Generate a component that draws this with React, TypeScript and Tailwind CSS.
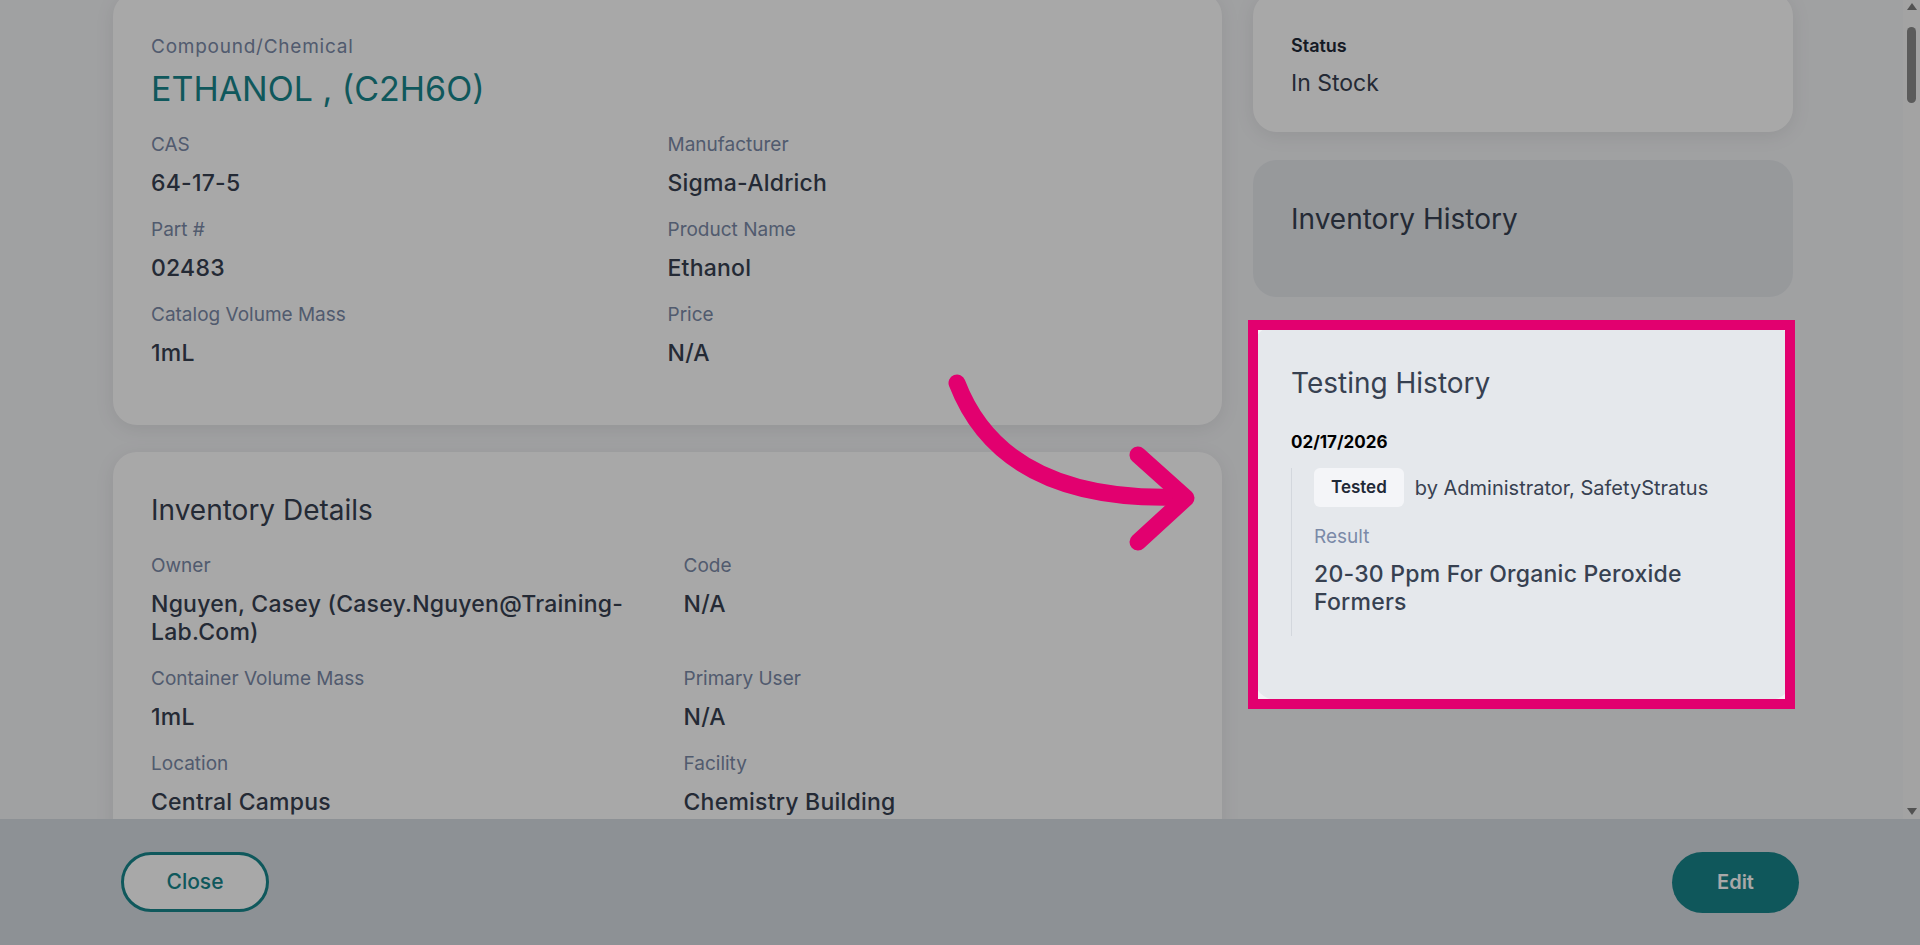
import React, { useLayoutEffect, useRef } from "react";

function Field({ label, value }: { label: string; value: string }) {
  return (
    <div className="flex flex-col mb-[21px]">
      <div className="text-[19px] leading-6 text-[#7b8aa8]">{label}</div>
      <div className="mt-3 text-[23px] leading-7 font-medium tracking-[0.01em] text-[#374151]">{value}</div>
    </div>
  );
}

export default function App() {
  const scroller = useRef<HTMLDivElement>(null);
  useLayoutEffect(() => {
    if (scroller.current) scroller.current.scrollTop = 124;
  }, []);

  return (
    <div className="relative h-[945px] w-full overflow-hidden flex flex-col bg-[#f3f4f6] font-['Inter',sans-serif]">
      <div className="flex h-[819px] shrink-0">
        <div ref={scroller} className="flex-1 h-full overflow-hidden">
          <div className="min-h-[2000px] pl-[113px] pt-[116px]">
            <div className="flex items-start gap-[31px]">
              {/* Left column */}
              <div className="w-[1109px] flex flex-col gap-[27px]">
                <div className="bg-white rounded-3xl px-[38px] pt-[43px] pb-[37px] shadow-[0_4px_20px_rgba(0,0,0,0.08)]">
                  <div className="text-[19px] leading-6 tracking-[0.04em] text-[#7b8aa8]">Compound/Chemical</div>
                  <div className="mt-[10px] text-[34px] leading-10 text-[#17868c]">ETHANOL , (C2H6O)</div>
                  <div className="mt-6 grid grid-cols-2">
                    <Field label="CAS" value="64-17-5" />
                    <Field label="Manufacturer" value="Sigma-Aldrich" />
                    <Field label="Part #" value="02483" />
                    <Field label="Product Name" value="Ethanol" />
                    <Field label="Catalog Volume Mass" value="1mL" />
                    <Field label="Price" value="N/A" />
                  </div>
                </div>

                <div className="bg-white rounded-3xl px-[38px] pt-[42px] pb-10 shadow-[0_4px_20px_rgba(0,0,0,0.08)]">
                  <div className="text-[28px] leading-8 text-[#374151] mb-7">Inventory Details</div>
                  <div className="grid grid-cols-2 gap-x-8">
                    <Field label="Owner" value="Nguyen, Casey (Casey.Nguyen@Training-Lab.Com)" />
                    <Field label="Code" value="N/A" />
                    <Field label="Container Volume Mass" value="1mL" />
                    <Field label="Primary User" value="N/A" />
                    <Field label="Location" value="Central Campus" />
                    <Field label="Facility" value="Chemistry Building" />
                  </div>
                </div>
              </div>

              {/* Right column */}
              <div className="w-[540px] flex flex-col gap-[28px]">
                <div className="bg-white rounded-3xl px-[38px] pt-[42px] pb-[35px] shadow-[0_4px_20px_rgba(0,0,0,0.08)]">
                  <div className="text-[18px] leading-6 font-semibold text-[#1f2937]">Status</div>
                  <div className="mt-[11px] text-[23px] leading-7 text-[#374151]">In Stock</div>
                </div>

                <div className="bg-[#e5e8ec] rounded-3xl px-[38px] pt-[43px] pb-[62px]">
                  <div className="text-[28px] leading-8 text-[#374151]">Inventory History</div>
                </div>

                <div className="bg-[#e5e8ec] rounded-3xl px-[38px] pt-[42px] pb-16">
                  <div className="text-[28px] leading-8 text-[#374151]">Testing History</div>
                  <div className="mt-[31px] text-[17px] leading-6 font-bold text-black">02/17/2026</div>
                  <div className="mt-[14px] border-l border-[#d3d7dd] pl-[22px] pb-5">
                    <div className="flex items-center gap-[11px]">
                      <span className="h-[39px] px-[17px] rounded-md bg-[#f4f5f8] flex items-center text-[17px] font-semibold text-[#1f2937]">
                        Tested
                      </span>
                      <span className="text-[20px] text-[#374151]">by Administrator, SafetyStratus</span>
                    </div>
                    <div className="mt-[18px] text-[19px] leading-6 text-[#7b8aa8]">Result</div>
                    <div className="mt-[11px] text-[23px] leading-7 font-medium tracking-[0.01em] text-[#374151]">
                      20-30 Ppm For Organic Peroxide Formers
                    </div>
                  </div>
                </div>
              </div>
            </div>
          </div>
        </div>

        {/* Scrollbar */}
        <div className="w-[17px] h-full shrink-0 bg-[#f7f7f7] flex flex-col items-center">
          <div className="h-[17px] w-full flex items-center justify-center">
            <div className="h-0 w-0 border-x-[5px] border-b-[7px] border-x-transparent border-b-[#7d7d7d] -translate-y-[2px]" />
          </div>
          <div className="flex-1 w-full flex flex-col items-center">
            <div className="mt-[10px] h-[76px] w-[9px] rounded-full bg-[#8a8a8a]" />
          </div>
          <div className="h-[17px] w-full flex items-center justify-center">
            <div className="h-0 w-0 border-x-[5px] border-t-[7px] border-x-transparent border-t-[#7d7d7d] translate-y-[1px]" />
          </div>
        </div>
      </div>

      <footer className="h-[126px] shrink-0 bg-[#d7dce2] flex items-center justify-between px-[121px]">
        <button className="h-[60px] w-[148px] rounded-full border-[3px] border-[#17868c] bg-white text-[21px] font-medium text-[#17868c]">
          Close
        </button>
        <button className="h-[61px] w-[127px] rounded-full bg-[#18858b] text-[20px] font-semibold text-white">
          Edit
        </button>
      </footer>

      {/* Highlight overlay */}
      <div className="pointer-events-none fixed left-[1248px] top-[320px] w-[547px] h-[389px] border-[10px] border-[#e2006f] shadow-[0_0_0_9999px_rgba(0,0,0,0.34)] z-10" />

      {/* Arrow */}
      <svg
        className="pointer-events-none fixed left-0 top-0 z-20"
        width="1920"
        height="945"
        viewBox="0 0 1920 945"
        fill="none"
      >
        <path
          d="M957 383 Q1003 503 1181 497"
          stroke="#e2006f"
          strokeWidth="17"
          strokeLinecap="round"
          fill="none"
        />
        <path
          d="M1138 455 L1186 498 L1138 542"
          stroke="#e2006f"
          strokeWidth="17"
          strokeLinecap="round"
          strokeLinejoin="round"
          fill="none"
        />
      </svg>
    </div>
  );
}
